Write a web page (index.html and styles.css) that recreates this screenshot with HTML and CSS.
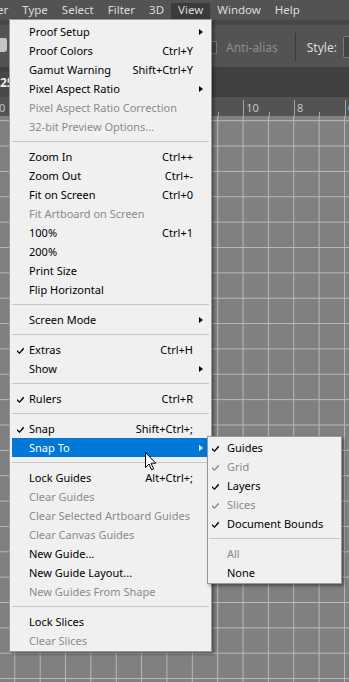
FILE: index.html
```html
<!DOCTYPE html>
<html lang="en">
<head>
    <meta charset="UTF-8">
    <meta name="viewport" content="width=device-width, initial-scale=1.0">
    <title>View Menu</title>
    <link rel="stylesheet" href="styles.css">
</head>
<body>
    <!-- Menu bar -->
    <div class="menubar">
        <span class="cut">er</span>
        <span>Type</span>
        <span>Select</span>
        <span>Filter</span>
        <span>3D</span>
        <span class="open">View</span>
        <span>Window</span>
        <span>Help</span>
    </div>

    <!-- Options bar -->
    <div class="options">
        <div class="tool-icon"></div>
        <div class="checkbox"></div>
        <span class="opt-off">Anti-alias</span>
        <div class="opt-sep"></div>
        <span class="opt-label">Style:</span>
        <div class="opt-input"></div>
    </div>

    <!-- Document tabs -->
    <div class="tabs">
        <div class="tab">25% (RGB/8)</div>
    </div>

    <!-- Ruler -->
    <div class="ruler">
        <div class="ruler-scale">
            <div class="ruler-cell">20</div>
            <div class="ruler-cell">18</div>
            <div class="ruler-cell">16</div>
            <div class="ruler-cell">14</div>
            <div class="ruler-cell">12</div>
            <div class="ruler-cell">10</div>
            <div class="ruler-cell">8</div>
            <div class="ruler-cell">6</div>
        </div>
    </div>

    <div class="canvas"></div>

    <!-- View menu -->
    <div class="menu">
        <div class="item"><span></span><span>Proof Setup</span><span></span><span class="sub"><i class="tri"></i></span></div>
        <div class="item"><span></span><span>Proof Colors</span><span>Ctrl+Y</span><span></span></div>
        <div class="item"><span></span><span>Gamut Warning</span><span>Shift+Ctrl+Y</span><span></span></div>
        <div class="item"><span></span><span>Pixel Aspect Ratio</span><span></span><span class="sub"><i class="tri"></i></span></div>
        <div class="item off"><span></span><span>Pixel Aspect Ratio Correction</span><span></span><span></span></div>
        <div class="item off"><span></span><span>32-bit Preview Options...</span><span></span><span></span></div>
        <div class="sep"></div>
        <div class="item"><span></span><span>Zoom In</span><span>Ctrl++</span><span></span></div>
        <div class="item"><span></span><span>Zoom Out</span><span>Ctrl+-</span><span></span></div>
        <div class="item"><span></span><span>Fit on Screen</span><span>Ctrl+0</span><span></span></div>
        <div class="item off"><span></span><span>Fit Artboard on Screen</span><span></span><span></span></div>
        <div class="item"><span></span><span>100%</span><span>Ctrl+1</span><span></span></div>
        <div class="item"><span></span><span>200%</span><span></span><span></span></div>
        <div class="item"><span></span><span>Print Size</span><span></span><span></span></div>
        <div class="item"><span></span><span>Flip Horizontal</span><span></span><span></span></div>
        <div class="sep"></div>
        <div class="item"><span></span><span>Screen Mode</span><span></span><span class="sub"><i class="tri"></i></span></div>
        <div class="sep"></div>
        <div class="item"><span class="check"><svg viewBox="0 0 7 7"><polygon points="0,3 2.5,5.2 6.4,0.5 7,2.3 2.5,7 0,4.8"/></svg></span><span>Extras</span><span>Ctrl+H</span><span></span></div>
        <div class="item"><span></span><span>Show</span><span></span><span class="sub"><i class="tri"></i></span></div>
        <div class="sep"></div>
        <div class="item"><span class="check"><svg viewBox="0 0 7 7"><polygon points="0,3 2.5,5.2 6.4,0.5 7,2.3 2.5,7 0,4.8"/></svg></span><span>Rulers</span><span>Ctrl+R</span><span></span></div>
        <div class="sep"></div>
        <div class="item"><span class="check"><svg viewBox="0 0 7 7"><polygon points="0,3 2.5,5.2 6.4,0.5 7,2.3 2.5,7 0,4.8"/></svg></span><span>Snap</span><span>Shift+Ctrl+;</span><span></span></div>
        <div class="item hot"><span></span><span>Snap To</span><span></span><span class="sub"><i class="tri"></i></span></div>
        <div class="sep"></div>
        <div class="item"><span></span><span>Lock Guides</span><span>Alt+Ctrl+;</span><span></span></div>
        <div class="item off"><span></span><span>Clear Guides</span><span></span><span></span></div>
        <div class="item off"><span></span><span>Clear Selected Artboard Guides</span><span></span><span></span></div>
        <div class="item off"><span></span><span>Clear Canvas Guides</span><span></span><span></span></div>
        <div class="item"><span></span><span>New Guide...</span><span></span><span></span></div>
        <div class="item"><span></span><span>New Guide Layout...</span><span></span><span></span></div>
        <div class="item off"><span></span><span>New Guides From Shape</span><span></span><span></span></div>
        <div class="sep"></div>
        <div class="item"><span></span><span>Lock Slices</span><span></span><span></span></div>
        <div class="item off"><span></span><span>Clear Slices</span><span></span><span></span></div>
    </div>

    <!-- Snap To submenu -->
    <div class="menu submenu">
        <div class="item"><span class="check"><svg viewBox="0 0 7 7"><polygon points="0,3 2.5,5.2 6.4,0.5 7,2.3 2.5,7 0,4.8"/></svg></span><span>Guides</span></div>
        <div class="item off"><span class="check"><svg viewBox="0 0 7 7"><polygon points="0,3 2.5,5.2 6.4,0.5 7,2.3 2.5,7 0,4.8"/></svg></span><span>Grid</span></div>
        <div class="item"><span class="check"><svg viewBox="0 0 7 7"><polygon points="0,3 2.5,5.2 6.4,0.5 7,2.3 2.5,7 0,4.8"/></svg></span><span>Layers</span></div>
        <div class="item off"><span class="check"><svg viewBox="0 0 7 7"><polygon points="0,3 2.5,5.2 6.4,0.5 7,2.3 2.5,7 0,4.8"/></svg></span><span>Slices</span></div>
        <div class="item"><span class="check"><svg viewBox="0 0 7 7"><polygon points="0,3 2.5,5.2 6.4,0.5 7,2.3 2.5,7 0,4.8"/></svg></span><span>Document Bounds</span></div>
        <div class="sep"></div>
        <div class="item off"><span></span><span>All</span></div>
        <div class="item"><span></span><span>None</span></div>
    </div>

    <!-- Mouse pointer -->
    <svg class="pointer" viewBox="0 0 12 19" width="12" height="19">
        <path d="M0.5 0.5 V15.5 L4 12 L6.6 17.8 L8.6 16.9 L6.1 11.2 H10.8 Z" fill="#fff" stroke="#000" stroke-width="1" stroke-linejoin="round"/>
    </svg>
</body>
</html>
```

FILE: styles.css
```css
body {
    margin: 0;
    width: 349px;
    height: 682px;
    overflow: hidden;
    position: relative;
    display: flex;
    flex-direction: column;
    font-family: "Noto Sans", "Open Sans", sans-serif;
    background: #808080;
}

/* top menu bar */
.menubar {
    height: 20px;
    flex: none;
    display: flex;
    background: #535353;
    color: #dcdcdc;
    font-size: 11.5px;
    line-height: 20px;
    white-space: nowrap;
    overflow: hidden;
}
.menubar span {
    padding: 0 7px;
}
.menubar .cut {
    padding-left: 0;
    margin-left: -3px;
}
.menubar .open {
    background: linear-gradient(transparent 3px, #3b3b3b 3px);
}

/* options bar */
.options {
    height: 40px;
    flex: none;
    border-top: 5px solid #474747;
    background: #535353;
    display: flex;
    align-items: center;
    padding-top: 2px;
    box-sizing: content-box;
    font-size: 12px;
    white-space: nowrap;
    overflow: hidden;
}
.options > * {
    flex: none;
}
.tool-icon {
    width: 7px;
    height: 14px;
    background: #c4c4c4;
    border-radius: 0 2px 3px 0;
    margin-top: -4px;
}
.checkbox {
    width: 11px;
    height: 11px;
    border: 1px solid #7a7a7a;
    background: #454545;
    margin-left: 197px;
}
.opt-off {
    color: #8e8e8e;
    margin-left: 9px;
}
.opt-sep {
    width: 1px;
    height: 29px;
    background: #3a3a3a;
    margin-left: 17px;
}
.opt-label {
    color: #dcdcdc;
    margin-left: 11px;
}
.opt-input {
    width: 40px;
    height: 20px;
    border: 1px solid #7a7a7a;
    border-radius: 2px;
    background: #454545;
    margin-left: 6px;
}

/* document tabs */
.tabs {
    height: 30px;
    flex: none;
    background: #404040;
    display: flex;
    align-items: flex-end;
    overflow: hidden;
}
.tab {
    height: 25px;
    line-height: 22px;
    padding-right: 10px;
    background: #484848;
    color: #f0f0f0;
    font-size: 12px;
    font-weight: bold;
    white-space: nowrap;
}

/* ruler */
.ruler {
    height: 19px;
    flex: none;
    background: #535353;
    overflow: hidden;
}
.ruler-scale {
    display: flex;
    margin-left: -10.3px;
}
.ruler-cell {
    flex: 0 0 50.72px;
    height: 19px;
    box-sizing: border-box;
    padding: 1px 0 0 3px;
    font-size: 11px;
    line-height: 19px;
    color: #c2c2c2;
    background:
        linear-gradient(#a5a5a5, #a5a5a5) no-repeat 0 100% / 1px 16px,
        linear-gradient(#a5a5a5, #a5a5a5) no-repeat 25.36px 100% / 1px 4px;
}

/* canvas with grid */
.canvas {
    flex: 1;
    background-color: #808080;
    background-image:
        linear-gradient(to right, #b9b9b9 1px, transparent 1px),
        linear-gradient(to bottom, #b9b9b9 1px, transparent 1px);
    background-size: 25.36px 25.36px;
    background-position: 14.3px 4.2px;
}

/* dropdown menus */
.menu {
    position: absolute;
    left: 9px;
    top: 19px;
    width: 203px;
    box-sizing: border-box;
    padding: 2px 2px 1px;
    background: #f0f0f0;
    border: 1px solid #999;
    box-shadow: 2px 2px 3px rgba(0, 0, 0, 0.4);
    font-size: 11px;
    color: #000;
}
.item {
    display: grid;
    grid-template-columns: 17px 1fr auto 16px;
    height: 19px;
    box-sizing: border-box;
    padding-top: 1px;
    line-height: 18px;
    white-space: nowrap;
}
.item.off {
    color: #8b8b8b;
}
.item.hot {
    background: #0078d7;
    color: #fff;
}
.check {
    display: flex;
    align-items: center;
}
.check svg {
    width: 7px;
    height: 7px;
    margin-left: 5px;
    fill: currentColor;
}
.sub {
    display: flex;
    align-items: center;
    justify-content: center;
}
.tri {
    width: 0;
    height: 0;
    border-left: 4px solid currentColor;
    border-top: 3.5px solid transparent;
    border-bottom: 3.5px solid transparent;
}
.sep {
    height: 1px;
    margin: 5px 0;
    background: #c6c6c6;
}

.submenu {
    left: 207px;
    top: 436px;
    width: 135px;
    padding: 1px;
}
.submenu .item {
    grid-template-columns: 18px 1fr;
}
.submenu .check svg {
    margin-left: 3px;
}

.pointer {
    position: absolute;
    left: 145px;
    top: 452px;
}
```
